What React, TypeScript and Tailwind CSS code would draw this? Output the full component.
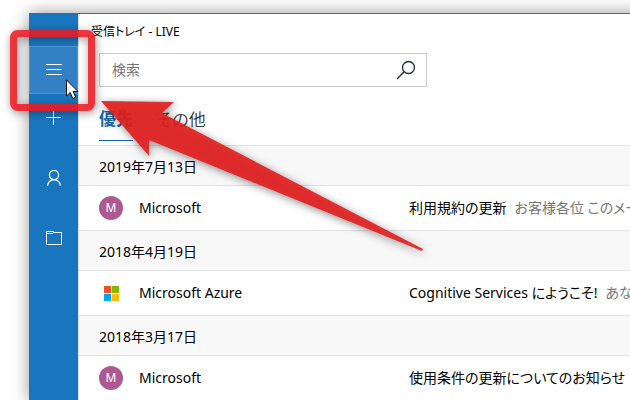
import { clsx } from 'clsx';

type Mail = {
    date: string;
    sender: string;
    subject: string;
    preview?: string;
    logo?: boolean;
};

const mails: Mail[] = [
    {
        date: '2019年7月13日',
        sender: 'Microsoft',
        subject: '利用規約の更新',
        preview: 'お客様各位 このメー',
    },
    {
        date: '2018年4月19日',
        sender: 'Microsoft Azure',
        subject: 'Cognitive Services にようこそ!',
        preview: 'あなた',
        logo: true,
    },
    {
        date: '2018年3月17日',
        sender: 'Microsoft',
        subject: '使用条件の更新についてのお知らせ',
    },
];

const iconClass = 'size-4 fill-none stroke-white';

function MenuIcon() {
    return (
        <svg viewBox="0 0 16 16" className={iconClass} aria-hidden>
            <path d="M0 2.5h16M0 7.5h16M0 12.5h16" />
        </svg>
    );
}

function PlusIcon() {
    return (
        <svg viewBox="0 0 16 16" className={iconClass} aria-hidden>
            <path d="M0 7.5h15M7.5 0v15" />
        </svg>
    );
}

function PersonIcon() {
    return (
        <svg viewBox="0 0 16 16" className={iconClass} aria-hidden>
            <circle cx="8" cy="5" r="4.6" strokeWidth="1.2" />
            <path d="M1.5 16a6.5 6.4 0 0 1 13 0" strokeWidth="1.2" />
        </svg>
    );
}

function FolderIcon() {
    return (
        <svg viewBox="0 0 16 16" className={iconClass} aria-hidden>
            <path d="M.5 1.5h7v1h8v12H.5zM.5 3.5h6l1-1" />
        </svg>
    );
}

function SearchIcon() {
    return (
        <svg viewBox="0 0 20 20" className="size-5 fill-none stroke-gray-800" aria-hidden>
            <circle cx="12.5" cy="7.5" r="6" strokeWidth="1.3" />
            <path d="M8.2 11.8 1 19" strokeWidth="1.3" />
        </svg>
    );
}

function MicrosoftLogo() {
    return (
        <svg viewBox="0 0 24 24" className="size-6 shrink-0" aria-hidden>
            <path fill="#f25022" d="M5 5h7v7H5z" />
            <path fill="#7fba00" d="M13 5h7v7h-7z" />
            <path fill="#00a4ef" d="M5 13h7v7H5z" />
            <path fill="#ffb900" d="M13 13h7v7h-7z" />
        </svg>
    );
}

function Sidebar() {
    const button = 'flex h-12 w-full items-center justify-center';

    return (
        <nav className="flex w-[49px] shrink-0 flex-col bg-[#1a75bf] pt-8">
            <button
                aria-label="メニュー"
                className={clsx(button, 'border border-[#4d94cf] bg-[#3281c5]')}
            >
                <MenuIcon />
            </button>
            <button aria-label="新規メール" className={button}>
                <PlusIcon />
            </button>
            <button aria-label="アカウント" className={clsx(button, 'mt-3')}>
                <PersonIcon />
            </button>
            <button aria-label="フォルダー" className={clsx(button, 'mt-3')}>
                <FolderIcon />
            </button>
        </nav>
    );
}

function MailGroup({ mail }: { mail: Mail }) {
    return (
        <section>
            <h2 className="flex h-10 items-center border-b border-[#e1e1e1] bg-[#f8f8f8] pt-0.5 pl-5">
                {mail.date}
            </h2>
            <a
                href="#"
                className="flex h-[45px] items-center border-b border-[#e1e1e1] pl-5 whitespace-nowrap"
            >
                {mail.logo ? (
                    <MicrosoftLogo />
                ) : (
                    <span className="flex size-6 shrink-0 items-center justify-center rounded-full bg-[#ae5890] text-xs text-white">
                        M
                    </span>
                )}
                <span className="ml-4 w-[270px] shrink-0">{mail.sender}</span>
                <span>{mail.subject}</span>
                <span className="ml-2 text-[#767676]">{mail.preview}</span>
            </a>
        </section>
    );
}

/** Red frame, pointer and arrow that lie over the window. */
function Annotation() {
    return (
        <svg
            viewBox="0 0 630 400"
            className="pointer-events-none absolute top-0 left-0 h-[400px] w-[630px] fill-none"
            aria-hidden
        >
            <defs>
                <filter id="shade" x="-20%" y="-20%" width="140%" height="140%">
                    <feDropShadow dx="1" dy="2" stdDeviation="4" floodOpacity="0.5" />
                </filter>
            </defs>
            <path
                d="M66.5 80v16l3.7-3.5 2.6 6 2.9-1.3-2.6-5.7h5z"
                fill="#fff"
                stroke="#111"
            />
            <rect
                x="13.5"
                y="33.5"
                width="78"
                height="74"
                rx="4"
                stroke="#f01c1e"
                strokeOpacity="0.84"
                strokeWidth="7"
                filter="url(#shade)"
            />
            <path
                d="M101 101 174 102 162 113 423 249 422 251 149 140 149 156z"
                fill="#e01c1e"
                fillOpacity="0.9"
                filter="url(#shade)"
            />
        </svg>
    );
}

export default function App() {
    return (
        <div className="relative min-h-screen overflow-hidden bg-white pt-[13px] pl-[29px] font-['Noto_Sans','Noto_Sans_CJK_JP',sans-serif] text-sm text-black [font-feature-settings:'palt']">
            <div className="-mr-8 flex min-h-[387px] border-t border-[#1a75bf] shadow-[0_0_16px_rgba(0,0,0,0.4)]">
                <Sidebar />
                <main className="min-w-0 flex-1 overflow-hidden border-l border-[#e1e1e1] bg-white">
                    <h1 className="h-[39px] pt-2 pl-3 text-xs leading-5">受信トレイ - LIVE</h1>
                    <label className="ml-5 flex h-[34px] w-[328px] items-center border border-[#ccc] pr-[10px] pl-3">
                        <input
                            type="search"
                            aria-label="検索"
                            placeholder="検索"
                            className="min-w-0 flex-1 outline-none placeholder:text-[#767676]"
                        />
                        <SearchIcon />
                    </label>
                    <div className="flex h-[59px] items-end border-b border-[#e1e1e1] pb-1 pl-5 text-[17px]">
                        <button className="h-[42px] border-b border-[#1665a8] font-bold text-[#1665a8]">
                            優先
                        </button>
                        <button className="ml-6 h-[42px] font-[350] text-[#333]">その他</button>
                    </div>
                    {mails.map((mail) => (
                        <MailGroup key={mail.date} mail={mail} />
                    ))}
                </main>
            </div>
            <Annotation />
        </div>
    );
}
